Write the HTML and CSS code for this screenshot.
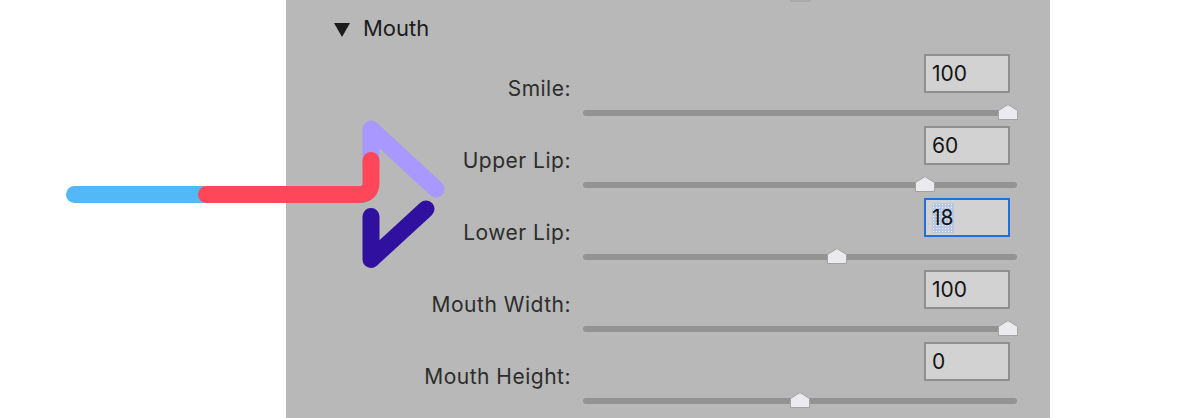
FILE: index.html
```html
<!DOCTYPE html>
<html>
<head>
<meta charset="utf-8">
<link rel="stylesheet" href="styles.css">
</head>
<body>
<div class="page">
  <div class="margin"></div>
  <div class="panel">
    <div class="prev-thumb"></div>
    <div class="header">
      <span class="disclosure"></span>
      <span class="title">Mouth</span>
    </div>
    <div class="rows">
      <div class="row">
        <div class="label">Smile:</div>
        <div class="control">
          <div class="field">100</div>
          <div class="track"><svg class="thumb" style="left:415px" viewBox="0 0 20 16" width="20" height="16"><path d="M0.5 6.5 L10 0.6 L19.5 6.5 V15.5 H0.5 Z"/></svg></div>
        </div>
      </div>
      <div class="row">
        <div class="label">Upper Lip:</div>
        <div class="control">
          <div class="field">60</div>
          <div class="track"><svg class="thumb" style="left:332px" viewBox="0 0 20 16" width="20" height="16"><path d="M0.5 6.5 L10 0.6 L19.5 6.5 V15.5 H0.5 Z"/></svg></div>
        </div>
      </div>
      <div class="row">
        <div class="label">Lower Lip:</div>
        <div class="control">
          <div class="field focused"><span class="selected">18</span></div>
          <div class="track"><svg class="thumb" style="left:244px" viewBox="0 0 20 16" width="20" height="16"><path d="M0.5 6.5 L10 0.6 L19.5 6.5 V15.5 H0.5 Z"/></svg></div>
        </div>
      </div>
      <div class="row">
        <div class="label">Mouth Width:</div>
        <div class="control">
          <div class="field">100</div>
          <div class="track"><svg class="thumb" style="left:415px" viewBox="0 0 20 16" width="20" height="16"><path d="M0.5 6.5 L10 0.6 L19.5 6.5 V15.5 H0.5 Z"/></svg></div>
        </div>
      </div>
      <div class="row">
        <div class="label">Mouth Height:</div>
        <div class="control">
          <div class="field">0</div>
          <div class="track"><svg class="thumb" style="left:207px" viewBox="0 0 20 16" width="20" height="16"><path d="M0.5 6.5 L10 0.6 L19.5 6.5 V15.5 H0.5 Z"/></svg></div>
        </div>
      </div>
    </div>
  </div>
  <svg class="logo" viewBox="0 0 1200 418" width="1200" height="418">
    <g fill="none" stroke-width="17" stroke-linecap="round" stroke-linejoin="round">
      <path stroke="#52b9f6" d="M74.5 194.5 H210"/>
      <path stroke="#a898ff" d="M371 165 V129 L436 189"/>
      <path stroke="#30109f" d="M371 216.5 V259.5 L426 209"/>
      <path stroke="#ff4759" d="M206.5 194.5 H359 Q371 194.5 371 182.5 V160.5"/>
    </g>
  </svg>
</div>
</body>
</html>
```
FILE: styles.css
```css
html, body {
  margin: 0;
  padding: 0;
  background: #ffffff;
}

body {
  width: 1200px;
  height: 418px;
  overflow: hidden;
  font-family: Inter, "Noto Sans", "Liberation Sans", sans-serif;
}

.page {
  position: relative;
  display: flex;
  width: 1200px;
  height: 418px;
}

.margin {
  width: 286px;
  flex: none;
}

.panel {
  position: relative;
  width: 764px;
  height: 418px;
  flex: none;
  background: #b7b8b7;
  padding-top: 16px;
  box-sizing: border-box;
}

.prev-thumb {
  position: absolute;
  left: 504px;
  top: 0;
  width: 21px;
  height: 2px;
  background: #a9aaa9;
}

.header {
  display: flex;
  align-items: flex-start;
  gap: 13px;
  padding-left: 48px;
  height: 24px;
}

.disclosure {
  width: 0;
  height: 0;
  margin-top: 7px;
  border-left: 8.5px solid transparent;
  border-right: 8.5px solid transparent;
  border-top: 14px solid #1c1c1c;
}

.title {
  font-size: 22px;
  line-height: 24px;
  color: #1c1c1c;
}

.rows {
  margin-top: 14px;
  display: flex;
  flex-direction: column;
}

.row {
  display: grid;
  grid-template-columns: 285px 434px;
  column-gap: 12px;
  height: 72px;
}

.label {
  text-align: right;
  padding-top: 23px;
  font-size: 21px;
  line-height: 24px;
  letter-spacing: 0.5px;
  color: #2d2d2d;
  white-space: nowrap;
}

.control {
  display: flex;
  flex-direction: column;
  align-items: flex-end;
}

.field {
  box-sizing: border-box;
  width: 86px;
  height: 39px;
  margin-right: 7px;
  border: 2px solid #8f8f8f;
  background: #d2d2d2;
  padding-left: 6px;
  display: flex;
  align-items: center;
  font-size: 21px;
  color: #141414;
}

.field.focused {
  border-color: #1f6fe0;
}

.selected {
  line-height: 30px;
  background-color: #b5c6e6;
  background-image: radial-gradient(circle, rgba(255,255,255,0.85) 0.7px, transparent 1px);
  background-size: 3px 3px;
}

.track {
  position: relative;
  align-self: stretch;
  margin-top: 17px;
  height: 6px;
  border-radius: 3px;
  background: #939393;
}

.thumb {
  position: absolute;
  top: -6px;
  display: block;
}

.thumb path {
  fill: #ebebef;
  stroke: #a3a3a3;
  stroke-width: 1;
  stroke-linejoin: round;
}

.logo {
  position: absolute;
  left: 0;
  top: 0;
  pointer-events: none;
}
```
